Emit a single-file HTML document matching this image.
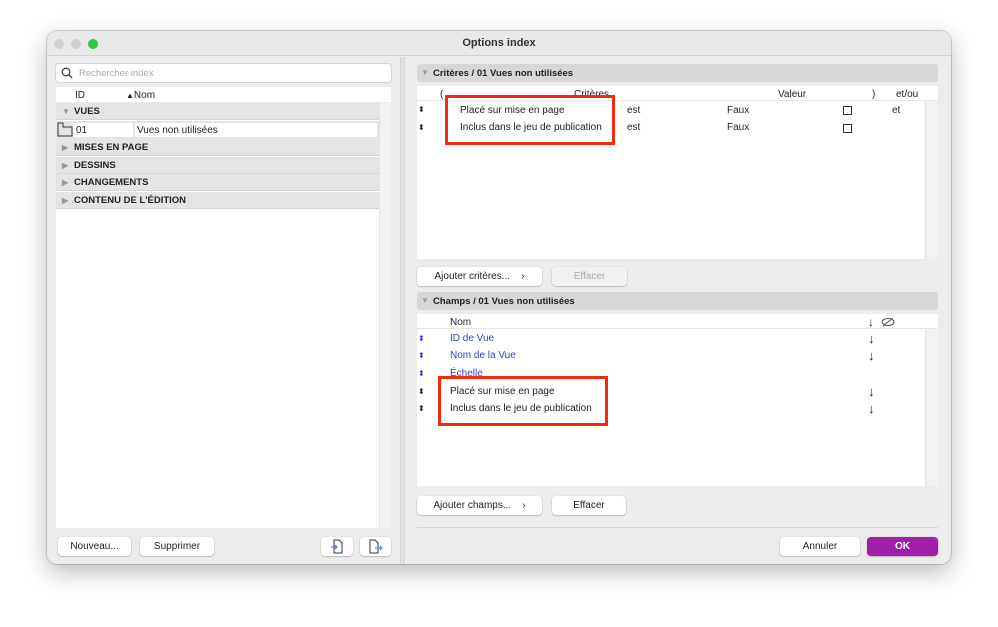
<!DOCTYPE html>
<html><head><meta charset="utf-8"><style>
*{box-sizing:border-box;margin:0;padding:0}
body{width:998px;height:627px;background:#fff;font-family:"Liberation Sans",sans-serif;font-size:10px;color:#222;position:relative;overflow:hidden}
.a{position:absolute}
.win{left:47px;top:31px;width:904px;height:533px;background:#ececec;border-radius:10px;box-shadow:0 8px 24px rgba(0,0,0,.28),0 0 0 1px rgba(0,0,0,.15);overflow:hidden}
.btn{position:absolute;background:#fff;border-radius:4px;box-shadow:0 0.5px 1.5px rgba(0,0,0,.35);font-size:10px;text-align:center;line-height:19px;height:19px}
.row{position:absolute;left:56px;width:323px;height:17px;background:#e4e4e4;border-bottom:1px solid #d4d4d4;font-weight:bold;font-size:9.5px;line-height:17px;padding-left:18px}
.tri{position:absolute;left:6px;top:0;color:#999;font-size:8px}
.red{position:absolute;border:3px solid #f52a0c}
.sort{position:absolute;font-size:8px;line-height:8px}
.t{position:absolute;font-size:10px}
.blue{color:#2f3fd0}
</style></head><body>
<div class="a win">
 <div class="a" style="left:0;top:0;width:904px;height:25px;background:#e8e8e8;border-bottom:1px solid #d2d2d2"></div>
 <div class="a" style="left:7px;top:8px;width:10px;height:10px;border-radius:50%;background:#d0d0d0"></div>
 <div class="a" style="left:24px;top:8px;width:10px;height:10px;border-radius:50%;background:#d0d0d0"></div>
 <div class="a" style="left:41px;top:8px;width:10px;height:10px;border-radius:50%;background:#2ac840"></div>
 <div class="a" style="left:0;top:6px;width:904px;text-align:center;font-weight:bold;font-size:11px;color:#333">Options index</div>
 <div class="a" style="left:353px;top:26px;width:5px;height:507px;background:#e0e0e0;border-left:1px solid #d6d6d6;border-right:1px solid #d6d6d6"></div>
</div>
<!-- left -->
<div class="a" style="left:56px;top:64px;width:335px;height:18px;background:#fff;border-radius:3px;box-shadow:0 0 0 1px #d4d4d4"></div>
<svg class="a" style="left:61px;top:67px" width="12" height="12"><circle cx="5" cy="5" r="3.8" fill="none" stroke="#444" stroke-width="1.3"/><line x1="8" y1="8" x2="11" y2="11" stroke="#444" stroke-width="1.4"/></svg>
<div class="t" style="left:79px;top:68px;color:#aaa;font-size:9.5px">Rechercher index</div>
<div class="a" style="left:56px;top:87px;width:335px;height:15px;background:#fff"></div>
<div class="t" style="left:75px;top:90px">ID</div>
<div class="t" style="left:126px;top:90px"><span style="font-size:8px">▲</span>Nom</div>
<div class="a" style="left:56px;top:103px;width:323px;height:425px;background:#fff"></div>
<div class="a" style="left:379px;top:103px;width:12px;height:425px;background:#f2f2f2;border-left:1px solid #e2e2e2"></div>
<div class="row" style="top:103px"><span class="tri">▼</span>VUES</div>
<div class="a" style="left:56px;top:121px;width:323px;height:18px;background:#e4e4e4"></div>
<div class="a" style="left:73px;top:123px;width:60px;height:14px;background:#fff"></div>
<div class="a" style="left:135px;top:123px;width:242px;height:14px;background:#fff"></div>
<svg class="a" style="left:57px;top:122px" width="16" height="15"><path d="M1 1h5v4h9v9H1z" fill="none" stroke="#333" stroke-width="1"/></svg>
<div class="t" style="left:76px;top:125px">01</div>
<div class="t" style="left:137px;top:125px">Vues non utilisées</div>
<div class="row" style="top:139px"><span class="tri">▶</span>MISES EN PAGE</div>
<div class="row" style="top:157px"><span class="tri">▶</span>DESSINS</div>
<div class="row" style="top:174px"><span class="tri">▶</span>CHANGEMENTS</div>
<div class="row" style="top:192px"><span class="tri">▶</span>CONTENU DE L'ÉDITION</div>
<div class="btn" style="left:58px;top:537px;width:73px">Nouveau...</div>
<div class="btn" style="left:140px;top:537px;width:74px">Supprimer</div>
<div class="btn" style="left:321px;top:537px;width:32px"><svg width="14" height="15" style="margin-top:2px"><path d="M4 1h5l3 3v10H4z" fill="none" stroke="#333"/><path d="M1 8h6M5 6l2 2-2 2" fill="none" stroke="#2a7be0"/></svg></div>
<div class="btn" style="left:360px;top:537px;width:31px"><svg width="16" height="15" style="margin-top:2px"><path d="M2 1h5l3 3v10H2z" fill="none" stroke="#333"/><path d="M7 9h7M12 7l2 2-2 2" fill="none" stroke="#2a7be0"/></svg></div>
<!-- right criteria -->
<div class="a" style="left:417px;top:64px;width:521px;height:18px;background:#d7d7d7;border-radius:3px"></div>
<div class="t" style="left:421px;top:68px;font-size:8px;color:#999">▼</div>
<div class="t" style="left:433px;top:68px;font-weight:bold;font-size:9.5px">Critères / 01 Vues non utilisées</div>
<div class="a" style="left:417px;top:86px;width:521px;height:173px;background:#fff"></div>
<div class="a" style="left:925px;top:100px;width:13px;height:159px;background:#f2f2f2;border-left:1px solid #e2e2e2"></div>
<div class="a" style="left:417px;top:100px;width:521px;height:1px;background:#e6e6e6"></div>
<div class="t" style="left:440px;top:89px">(</div>
<div class="t" style="left:574px;top:89px">Critères</div>
<div class="t" style="left:778px;top:89px">Valeur</div>
<div class="t" style="left:872px;top:89px">)</div>
<div class="t" style="left:896px;top:89px">et/ou</div>
<div class="sort" style="left:418px;top:106px">⬍</div><div class="sort" style="left:418px;top:124px">⬍</div>
<div class="t" style="left:460px;top:105px">Placé sur mise en page</div>
<div class="t" style="left:460px;top:122px">Inclus dans le jeu de publication</div>
<div class="t" style="left:627px;top:105px">est</div><div class="t" style="left:627px;top:122px">est</div>
<div class="t" style="left:727px;top:105px">Faux</div><div class="t" style="left:727px;top:122px">Faux</div>
<div class="a" style="left:843px;top:106px;width:9px;height:9px;border:1px solid #333"></div>
<div class="a" style="left:843px;top:124px;width:9px;height:9px;border:1px solid #333"></div>
<div class="t" style="left:892px;top:105px">et</div>
<div class="red" style="left:445px;top:95px;width:170px;height:50px"></div>
<div class="btn" style="left:417px;top:267px;width:125px">Ajouter critères...&nbsp;&nbsp;&nbsp;&nbsp;›</div>
<div class="btn" style="left:552px;top:267px;width:75px;color:#aaa;background:#f0f0f0">Effacer</div>
<!-- champs -->
<div class="a" style="left:417px;top:292px;width:521px;height:18px;background:#d7d7d7;border-radius:3px"></div>
<div class="t" style="left:421px;top:296px;font-size:8px;color:#999">▼</div>
<div class="t" style="left:433px;top:296px;font-weight:bold;font-size:9.5px">Champs / 01 Vues non utilisées</div>
<div class="a" style="left:417px;top:314px;width:521px;height:172px;background:#fff"></div>
<div class="a" style="left:925px;top:329px;width:13px;height:157px;background:#f2f2f2;border-left:1px solid #e2e2e2"></div>
<div class="a" style="left:417px;top:328px;width:521px;height:1px;background:#e6e6e6"></div>
<div class="t" style="left:450px;top:317px">Nom</div>
<div class="t" style="left:868px;top:315px;font-size:12px">↓</div>
<svg class="a" style="left:881px;top:317px" width="14" height="10"><ellipse cx="7" cy="5" rx="6" ry="3.5" fill="none" stroke="#555"/><line x1="2" y1="9" x2="12" y2="1" stroke="#555"/></svg>
<div class="sort blue" style="left:418px;top:335px">⬍</div><div class="sort blue" style="left:418px;top:352px">⬍</div><div class="sort blue" style="left:418px;top:370px">⬍</div>
<div class="sort" style="left:418px;top:388px">⬍</div><div class="sort" style="left:418px;top:405px">⬍</div>
<div class="t blue" style="left:450px;top:333px">ID de Vue</div>
<div class="t blue" style="left:450px;top:350px">Nom de la Vue</div>
<div class="t blue" style="left:450px;top:368px">Échelle</div>
<div class="t" style="left:450px;top:386px">Placé sur mise en page</div>
<div class="t" style="left:450px;top:403px">Inclus dans le jeu de publication</div>
<div class="t" style="left:868px;top:331px;font-size:13px">↓</div>
<div class="t" style="left:868px;top:348px;font-size:13px">↓</div>
<div class="t" style="left:868px;top:384px;font-size:13px">↓</div>
<div class="t" style="left:868px;top:401px;font-size:13px">↓</div>
<div class="red" style="left:438px;top:376px;width:170px;height:50px"></div>
<div class="btn" style="left:417px;top:496px;width:125px">Ajouter champs...&nbsp;&nbsp;&nbsp;&nbsp;›</div>
<div class="btn" style="left:552px;top:496px;width:74px">Effacer</div>
<div class="a" style="left:417px;top:527px;width:521px;height:1px;background:#d6d6d6"></div>
<div class="btn" style="left:780px;top:537px;width:80px">Annuler</div>
<div class="btn" style="left:867px;top:537px;width:71px;background:#a01ea8;color:#fff;font-weight:bold">OK</div>
</body></html>
